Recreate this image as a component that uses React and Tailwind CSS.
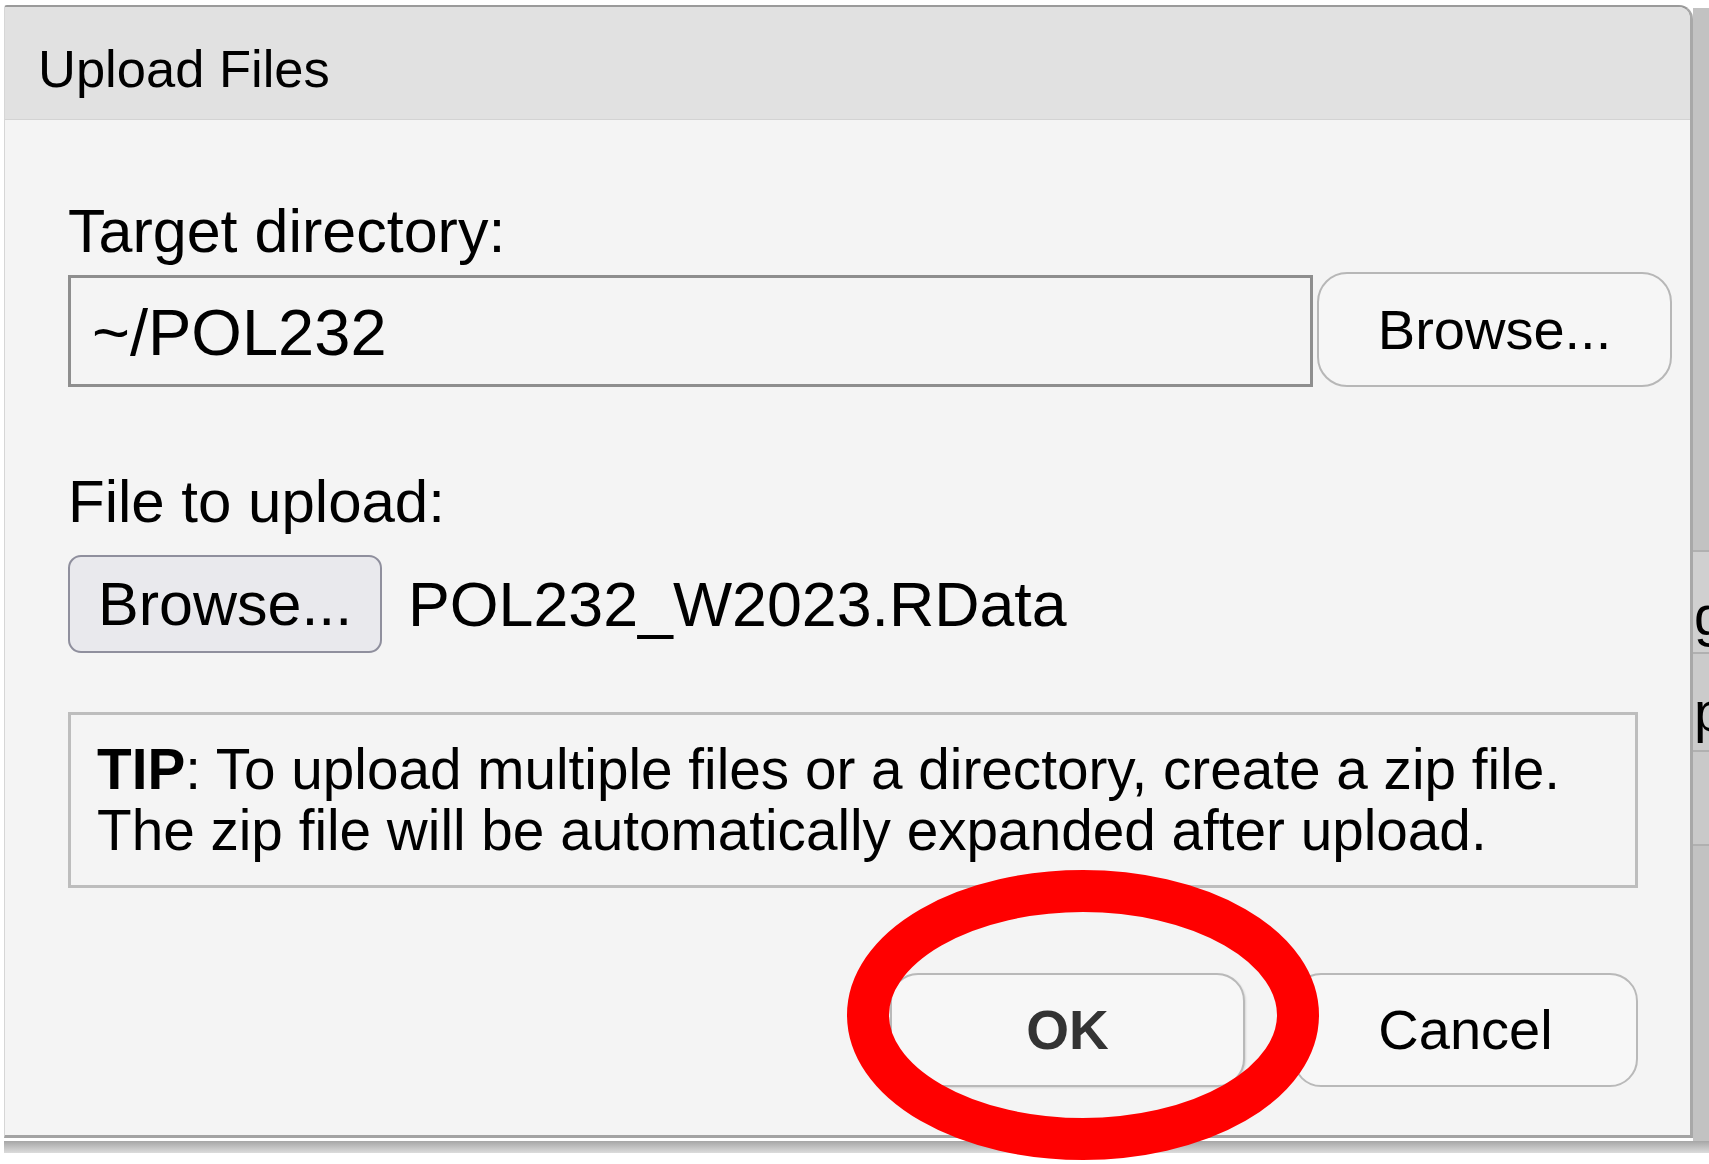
import React from "react";

export default function App() {
  const font = { fontFamily: '"Liberation Sans", Arial, sans-serif' };
  return (
    <div
      className="relative w-[1709px] h-[1164px] bg-white overflow-hidden flex flex-col text-black"
      style={font}
    >
      <div className="h-[5px] shrink-0" />
      <div className="flex flex-row shrink-0">
        <div className="w-[4px] shrink-0" />
        {/* Dialog */}
        <div className="w-[1689px] h-[1133px] shrink-0 flex flex-col bg-[#f4f4f4] border-t-2 border-t-[#9a9a9a] border-l border-l-[#d6d6d6] border-r-[3px] border-r-[#a8a8a8] border-b-[3px] border-b-[#a3a3a3] rounded-tr-[14px] rounded-tl-[3px] overflow-hidden">
          {/* Title bar */}
          <div className="h-[113px] shrink-0 bg-[#e1e1e1] border-b border-b-[#d3d3d3] pl-[33px] pt-[36px]">
            <div className="text-[52.5px] leading-none">Upload Files</div>
          </div>
          {/* Body */}
          <div className="flex-1 flex flex-col pl-[63px]">
            <div className="mt-[81px] text-[61px] leading-none h-[61px]">Target directory:</div>
            <div className="mt-[10px] flex flex-row items-end">
              <div className="w-[1245px] h-[112px] border-[3px] border-[#8e8e8e] bg-[#f4f4f4] pl-[21px] pt-[22px]">
                <div className="text-[65px] leading-none">~/POL232</div>
              </div>
              <div className="ml-[4px] w-[355px] h-[115px] rounded-[30px] border-2 border-[#b7b7b7] bg-[#f6f6f6] flex items-center justify-center">
                <span className="text-[56px] leading-none">Browse...</span>
              </div>
            </div>
            <div className="mt-[85px] text-[60px] leading-none h-[60px]">File to upload:</div>
            <div className="mt-[23px] flex flex-row items-center h-[98px]">
              <div className="w-[314px] h-[98px] rounded-[13px] border-2 border-[#8f8f9d] bg-[#e9e9ed] flex items-center pl-[28px]">
                <span className="text-[61px] leading-none">Browse...</span>
              </div>
              <span className="ml-[26px] text-[62.7px] leading-none">POL232_W2023.RData</span>
            </div>
            <div className="mt-[59px] w-[1570px] h-[176px] border-[3px] border-[#bdbdbd] pl-[26px] pt-[24px]">
              <div className="text-[56.7px] leading-[61px] whitespace-nowrap">
                <span className="font-bold">TIP</span>: To upload multiple files or a directory, create a zip file.
                <br />
                The zip file will be automatically expanded after upload.
              </div>
            </div>
            <div className="mt-[85px] w-[1570px] flex flex-row justify-end gap-[48px]">
              <div className="w-[355px] h-[114px] rounded-[28px] border-2 border-[#b9b9b9] bg-[#f7f7f7] flex items-center justify-center shadow-[1px_1px_2px_rgba(0,0,0,0.12)]">
                <span className="text-[55px] leading-none font-bold text-[#333333]">OK</span>
              </div>
              <div className="w-[345px] h-[114px] rounded-[28px] border-2 border-[#b9b9b9] bg-[#f7f7f7] flex items-center justify-center">
                <span className="text-[56px] leading-none">Cancel</span>
              </div>
            </div>
          </div>
        </div>
        {/* Background app strip */}
        <div className="flex-1 h-[1133px] bg-[#c4c4c4] flex flex-col overflow-hidden mt-[3px]">
          <div className="h-[542px] shrink-0 bg-[#c2c2c2]" />
          <div className="h-[2px] shrink-0 bg-[#b0b0b0]" />
          <div className="h-[100px] shrink-0 bg-[#d0d0d0] pl-[1px] pt-[36px]">
            <div className="text-[56px] leading-none h-[60px] w-[15px] overflow-hidden">g</div>
          </div>
          <div className="h-[2px] shrink-0 bg-[#b0b0b0]" />
          <div className="h-[96px] shrink-0 bg-[#cbcbcb] pl-[1px] pt-[30px]">
            <div className="text-[56px] leading-none h-[60px] w-[15px] overflow-hidden">p</div>
          </div>
          <div className="h-[2px] shrink-0 bg-[#b0b0b0]" />
          <div className="h-[92px] shrink-0 bg-[#c9c9c9]" />
          <div className="h-[2px] shrink-0 bg-[#b0b0b0]" />
          <div className="flex-1 bg-[#c2c2c2]" />
        </div>
      </div>
      {/* Shadow under dialog */}
      <div className="ml-[4px] h-[12px] shrink-0 bg-gradient-to-b from-[#a6a6a6] to-[#dcdcdc]" />

      {/* Red annotation ellipse */}
      <svg
        className="absolute left-0 top-0 pointer-events-none"
        width="1709"
        height="1164"
        viewBox="0 0 1709 1164"
      >
        <ellipse cx="1083" cy="1015" rx="215" ry="124" fill="none" stroke="#ff0000" strokeWidth="42" />
      </svg>
    </div>
  );
}
